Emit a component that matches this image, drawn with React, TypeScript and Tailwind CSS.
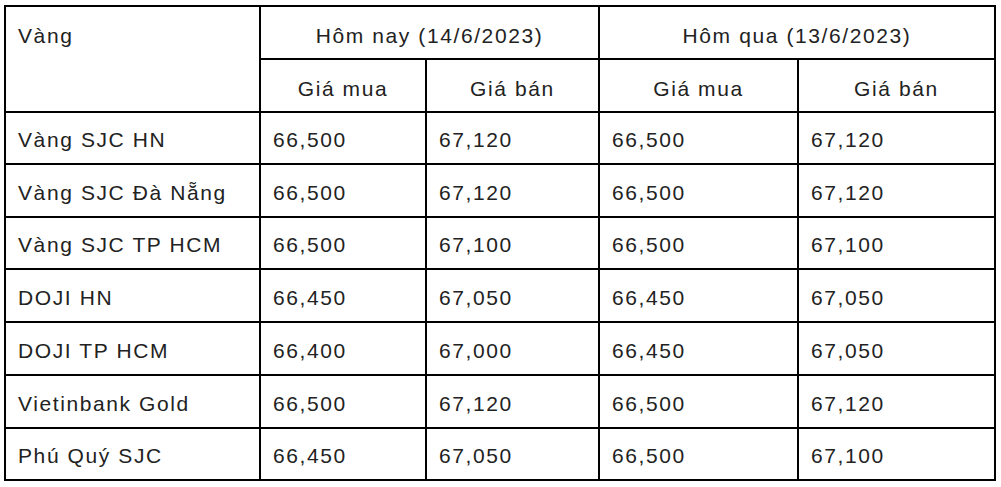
const rows = [
  ['Vàng SJC HN', '66,500', '67,120', '66,500', '67,120'],
  ['Vàng SJC Đà Nẵng', '66,500', '67,120', '66,500', '67,120'],
  ['Vàng SJC TP HCM', '66,500', '67,100', '66,500', '67,100'],
  ['DOJI HN', '66,450', '67,050', '66,450', '67,050'],
  ['DOJI TP HCM', '66,400', '67,000', '66,450', '67,050'],
  ['Vietinbank Gold', '66,500', '67,120', '66,500', '67,120'],
  ['Phú Quý SJC', '66,450', '67,050', '66,500', '67,100'],
];

const cell = 'bg-white flex items-center px-[12px] pt-[4px]';
const head = 'bg-white flex items-center justify-center pt-[7px]';

export default function App() {
  return (
    <div className="w-[1001px] h-[487px] bg-white pt-[5px] pl-[4px] font-['Liberation_Sans',Arial,sans-serif] text-[21px] tracking-[1.6px] text-[#222]">
      <div className="w-[992px] grid grid-cols-[253px_164px_171px_197px_195px] grid-rows-[51px_51px_50px_51px_50px_51px_51px_51px_50px] gap-[2px] p-[2px] bg-black">
        <div className="row-span-2 bg-white px-[12px] h-full">
          <div className="h-[51px] flex items-center pt-[7px]">Vàng</div>
        </div>
        <div className={'col-span-2 ' + head}>Hôm nay (14/6/2023)</div>
        <div className={'col-span-2 ' + head}>Hôm qua (13/6/2023)</div>
        <div className={head}>Giá mua</div>
        <div className={head}>Giá bán</div>
        <div className={head}>Giá mua</div>
        <div className={head}>Giá bán</div>
        {rows.map((r) =>
          r.map((v, i) => (
            <div key={r[0] + i} className={cell}>
              {v}
            </div>
          ))
        )}
      </div>
    </div>
  );
}
